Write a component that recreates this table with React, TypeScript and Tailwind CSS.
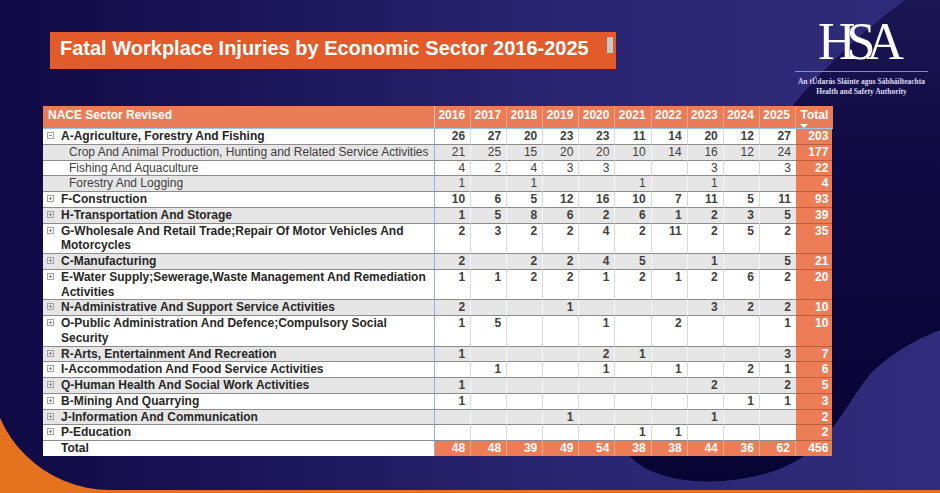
type Row = {
  label: string;
  sub?: boolean;
  open?: boolean;
  vals: (number | null)[];
  total: number;
};

const YEARS = [2016, 2017, 2018, 2019, 2020, 2021, 2022, 2023, 2024, 2025];

const ROWS: Row[] = [
  { label: "A-Agriculture, Forestry And Fishing", open: true, vals: [26, 27, 20, 23, 23, 11, 14, 20, 12, 27], total: 203 },
  { label: "Crop And Animal Production, Hunting and Related Service Activities", sub: true, vals: [21, 25, 15, 20, 20, 10, 14, 16, 12, 24], total: 177 },
  { label: "Fishing And Aquaculture", sub: true, vals: [4, 2, 4, 3, 3, null, null, 3, null, 3], total: 22 },
  { label: "Forestry And Logging", sub: true, vals: [1, null, 1, null, null, 1, null, 1, null, null], total: 4 },
  { label: "F-Construction", vals: [10, 6, 5, 12, 16, 10, 7, 11, 5, 11], total: 93 },
  { label: "H-Transportation And Storage", vals: [1, 5, 8, 6, 2, 6, 1, 2, 3, 5], total: 39 },
  { label: "G-Wholesale And Retail Trade;Repair Of Motor Vehicles And Motorcycles", vals: [2, 3, 2, 2, 4, 2, 11, 2, 5, 2], total: 35 },
  { label: "C-Manufacturing", vals: [2, null, 2, 2, 4, 5, null, 1, null, 5], total: 21 },
  { label: "E-Water Supply;Sewerage,Waste Management And Remediation Activities", vals: [1, 1, 2, 2, 1, 2, 1, 2, 6, 2], total: 20 },
  { label: "N-Administrative And Support Service Activities", vals: [2, null, null, 1, null, null, null, 3, 2, 2], total: 10 },
  { label: "O-Public Administration And Defence;Compulsory Social Security", vals: [1, 5, null, null, 1, null, 2, null, null, 1], total: 10 },
  { label: "R-Arts, Entertainment And Recreation", vals: [1, null, null, null, 2, 1, null, null, null, 3], total: 7 },
  { label: "I-Accommodation And Food Service Activities", vals: [null, 1, null, null, 1, null, 1, null, 2, 1], total: 6 },
  { label: "Q-Human Health And Social Work Activities", vals: [1, null, null, null, null, null, null, 2, null, 2], total: 5 },
  { label: "B-Mining And Quarrying", vals: [1, null, null, null, null, null, null, null, 1, 1], total: 3 },
  { label: "J-Information And Communication", vals: [null, null, null, 1, null, null, null, 1, null, null], total: 2 },
  { label: "P-Education", vals: [null, null, null, null, null, 1, 1, null, null, null], total: 2 },
];

const COL_TOTALS = [48, 48, 39, 49, 54, 38, 38, 44, 36, 62];

const ExpandIcon = ({ open }: { open?: boolean }) => (
  <svg width="7" height="7" viewBox="0 0 7 7" className="mt-[3px] ml-[4px] shrink-0">
    <rect x="0.5" y="0.5" width="6" height="6" fill="none" stroke="#a3a3a3" />
    <path d="M2 3.5h3" stroke="#8a8a8a" />
    {!open && <path d="M3.5 2v3" stroke="#8a8a8a" />}
  </svg>
);

const TableRow = ({ row, index }: { row: Row; index: number }) => {
  const gray = index % 2 === 1;
  const bg = gray ? "bg-[#e6e6e6]" : "bg-white";
  const sep = gray ? "border-r-[#f4f4f4]" : "border-r-[#d9d9d9]";
  return (
    <div className="grid grid-cols-[392px_repeat(10,36.1px)_36.4px] text-[12px] leading-[14.75px]">
      <div className={`flex border-b border-r border-b-[#8c8c8c] border-r-[#8db3e2] ${bg}`}>
        {row.sub ? (
          <span className="pl-[26px] text-[#404040]">{row.label}</span>
        ) : (
          <>
            <ExpandIcon open={row.open} />
            <span className="ml-[7px] pr-[4px] font-bold text-[#262626]">{row.label}</span>
          </>
        )}
      </div>
      {row.vals.map((v, i) => (
        <div
          key={i}
          className={`border-b border-b-[#8c8c8c] pr-[5px] text-right text-[#404040] ${bg} ${
            i < 9 ? `border-r ${sep}` : ""
          } ${row.sub ? "" : "font-bold"}`}
        >
          {v ?? ""}
        </div>
      ))}
      <div className="border-b border-b-[#b95f3c] bg-[#ec7d57] pr-[4px] text-right font-bold text-white">
        {row.total}
      </div>
    </div>
  );
};

export default function App() {
  return (
    <div className="relative h-[493px] w-[940px] overflow-hidden bg-[#e4721f] font-['Liberation_Sans',Arial,sans-serif]">
      {/* backdrop */}
      <div className="absolute -left-[10px] top-0 right-0 bottom-[3px] rounded-bl-[120px] bg-[linear-gradient(90deg,#0f0944_0%,#1c165a_30%,#2a2571_60%,#302c7b_100%)]" />
      <svg className="absolute inset-0" width="940" height="493" viewBox="0 0 940 493">
        <defs>
          <linearGradient id="dark" x1="0" y1="0" x2="0" y2="1">
            <stop offset="0" stopColor="#1b1553" />
            <stop offset="0.35" stopColor="#100a42" />
            <stop offset="1" stopColor="#070332" />
          </linearGradient>
        </defs>
        <path
          d="M905 0 C850 40 800 90 760 150 C690 250 610 370 622 440 C632 492 760 495 812 450 C840 425 852 395 872 372 C895 350 920 338 940 330 L940 0 Z"
          fill="url(#dark)"
        />
      </svg>

      <div className="relative flex flex-col">
        <div className="flex h-[106px] items-start justify-between pl-[50px] pr-[12px]">
          <div className="mt-[32px] flex h-[37px] w-[566px] justify-between bg-[#e35a2b] pl-[10px] pr-[3px]">
            <span className="pt-[6px] text-[20px] font-bold leading-[20px] text-white">
              Fatal Workplace Injuries by Economic Sector 2016-2025
            </span>
            <span className="mt-[5px] h-[16px] w-[6px] bg-[#c9c9c9]" />
          </div>
          <div className="mt-[16px] flex w-[133px] flex-col items-center font-['Liberation_Serif',serif] text-white">
            <span className="pr-[10px] text-[52px] leading-[52px] tracking-[-9px]">HSA</span>
            <span className="mt-[3px] h-px w-full bg-[#8f8bb5]" />
            <span className="mt-[5px] text-center text-[7.5px] font-bold leading-[10px] text-[#dcdaf0]">
              An tÚdarás Sláinte agus Sábháilteachta
              <br />
              Health and Safety Authority
            </span>
          </div>
        </div>

        <div className="ml-[43px] w-[790px]">
          <div className="grid h-[23px] grid-cols-[392px_repeat(10,36.1px)_36.4px] border-b border-[#9dc3e6] bg-[#eb7c58] text-[12px] font-bold leading-[14px] text-white">
            <div className="border-r border-[#f6c2ad] pl-[5px] pt-[2px]">NACE Sector Revised</div>
            {YEARS.map((y) => (
              <div key={y} className="border-r border-[#f2a487] pr-[5px] pt-[2px] text-right">
                {y}
              </div>
            ))}
            <div className="flex flex-col items-end pr-[4px] pt-[2px]">
              <span>Total</span>
              <span className="mr-[20px] mt-[2px] h-0 w-0 border-x-[4px] border-t-[4px] border-x-transparent border-t-white" />
            </div>
          </div>

          {ROWS.map((r, i) => (
            <TableRow key={r.label} row={r} index={i} />
          ))}

          <div className="grid grid-cols-[392px_repeat(10,36.1px)_36.4px] text-[12px] font-bold leading-[14.75px]">
            <div className="border-r border-[#8db3e2] bg-white pl-[18px] text-[#262626]">Total</div>
            {COL_TOTALS.map((t, i) => (
              <div key={i} className="border-r border-[#f2a98c] bg-[#ec7d57] pr-[5px] text-right text-white">
                {t}
              </div>
            ))}
            <div className="bg-[#ec7d57] pr-[4px] text-right text-white">456</div>
          </div>
        </div>
      </div>
    </div>
  );
}
